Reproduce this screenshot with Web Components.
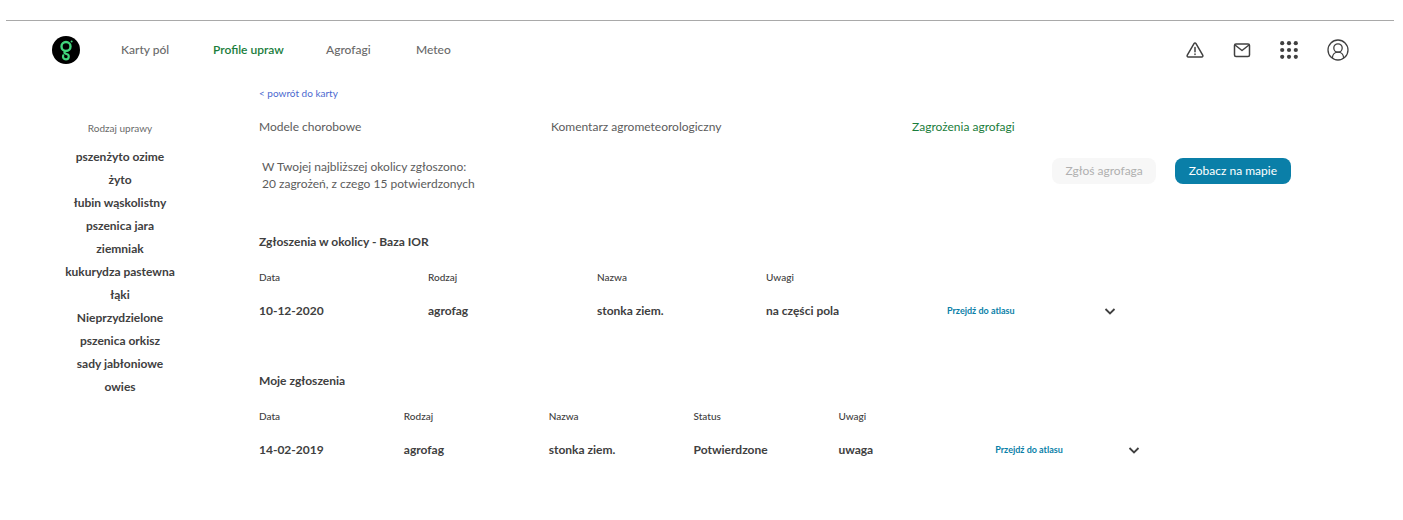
<!DOCTYPE html>
<html lang="pl">
<head>
<meta charset="utf-8">
<meta name="viewport" content="width=device-width, initial-scale=1">
<title>Profile upraw – Zagrożenia agrofagi</title>
<style>
  body {
    margin: 0;
    background: #fff;
    color: #404040;
    font: 12px/20px Lato, "Open Sans", sans-serif;
    --green: #1a7d3c;
    --blue: #0a7fa8;
    --grey: #6a6a6a;
  }
</style>
</head>
<body>
<profile-page>
  <app-header slot="header">
    <nav-item href="#pola">Karty pól</nav-item>
    <nav-item href="#profile" active>Profile upraw</nav-item>
    <nav-item href="#agrofagi">Agrofagi</nav-item>
    <nav-item href="#meteo">Meteo</nav-item>
  </app-header>
  <crop-list slot="side" heading="Rodzaj uprawy"
    items="pszenżyto ozime|żyto|łubin wąskolistny|pszenica jara|ziemniak|kukurydza pastewna|łąki|Nieprzydzielone|pszenica orkisz|sady jabłoniowe|owies"></crop-list>
  <page-tabs items="Modele chorobowe|Komentarz agrometeorologiczny|Zagrożenia agrofagi" current="2"></page-tabs>
  <threat-summary>
    W Twojej najbliższej okolicy zgłoszono:<br>20 zagrożeń, z czego 15 potwierdzonych
  </threat-summary>
  <report-table heading="Zgłoszenia w okolicy - Baza IOR" columns="Data|Rodzaj|Nazwa|Uwagi"
    values="10-12-2020|agrofag|stonka ziem.|na części pola"></report-table>
  <report-table heading="Moje zgłoszenia" columns="Data|Rodzaj|Nazwa|Status|Uwagi"
    values="14-02-2019|agrofag|stonka ziem.|Potwierdzone|uwaga"></report-table>
</profile-page>

<script>
const base = `
  * { box-sizing: border-box; }
  a { color: inherit; text-decoration: none; }
  button { font: inherit; color: inherit; margin: 0; padding: 0; border: 0; background: none; cursor: pointer; }
  svg { display: block; }
`;

class Base extends HTMLElement {
  connectedCallback() {
    if (this.shadowRoot) return;
    this.attachShadow({ mode: 'open' }).innerHTML = `<style>${base}${this.css()}</style>${this.html()}`;
  }
  list(name) { return this.getAttribute(name).split('|'); }
}

customElements.define('profile-page', class extends Base {
  css() { return `
    :host { display: block; padding: 20px 0; }
    .body { display: flex; }
    aside { flex: 0 0 240px; padding-top: 41px; }
    main { flex: 1; min-width: 0; padding: 6px 112px 0 19px; }
    .back { display: block; width: max-content; font-size: 10px; line-height: 16px; color: #4b69cf; margin-bottom: 16px; }
  `; }
  html() { return `
    <slot name="header"></slot>
    <div class="body">
      <aside><slot name="side"></slot></aside>
      <main><a class="back" href="#karta">&lt; powrót do karty</a><slot></slot></main>
    </div>`; }
});

customElements.define('app-header', class extends Base {
  css() { return `
    :host { display: block; margin: 0 9px 0 6px; border-top: 1px solid #a9a9a9; }
    header { display: flex; align-items: center; height: 58px; padding: 0 42px 0 46px; }
    nav { display: grid; grid-template-columns: 92px 113px 90px auto; margin-left: 41px; }
    .tools { display: flex; align-items: center; gap: 23px; margin-left: auto; color: #404040; }
  `; }
  html() { return `
    <header>
      <a href="#" aria-label="Strona główna">
        <svg width="28" height="28" viewBox="0 0 28 28" fill="none" stroke="#41d57c">
          <circle cx="14" cy="14" r="14" fill="#000" stroke="none"/>
          <circle cx="14" cy="10.500" r="4.500" stroke-width="2.400"/>
          <path d="M14 15c-2 .6-2.200 2.200-.4 2.700l1.600.5c2.400.8 2 5.200-1.200 5.200-2.400 0-3.500-2-2.800-4" stroke-width="2.200" stroke-linecap="round"/>
          <circle cx="19.600" cy="5.400" r="1" fill="#41d57c" stroke="none"/>
        </svg>
      </a>
      <nav><slot></slot></nav>
      <div class="tools">
        <button aria-label="Ostrzeżenia"><svg width="24" height="24" viewBox="0 0 24 24" fill="none" stroke="currentColor" stroke-width="1.500" stroke-linejoin="round" stroke-linecap="round"><path d="M11 5.700 4.300 17.200c-.5.9 0 1.900 1 1.900h13.400c1 0 1.500-1 1-1.900L13 5.700c-.5-.8-1.500-.8-2 0Z"/><path d="M12 9.500v4.200M12 16v.5"/></svg></button>
        <button aria-label="Wiadomości"><svg width="24" height="24" viewBox="0 0 24 24" fill="none" stroke="currentColor" stroke-width="1.500" stroke-linejoin="round"><rect x="4.500" y="6" width="15" height="12.500" rx="1.500"/><path d="m5 7 7 5.500L19 7"/></svg></button>
        <button aria-label="Aplikacje"><svg width="24" height="24" viewBox="0 0 24 24" fill="currentColor"><circle cx="5.200" cy="5.200" r="2.100"/><circle cx="12" cy="5.200" r="2.100"/><circle cx="18.800" cy="5.200" r="2.100"/><circle cx="5.200" cy="12" r="2.100"/><circle cx="12" cy="12" r="2.100"/><circle cx="18.800" cy="12" r="2.100"/><circle cx="5.200" cy="18.800" r="2.100"/><circle cx="12" cy="18.800" r="2.100"/><circle cx="18.800" cy="18.800" r="2.100"/></svg></button>
        <button aria-label="Konto"><svg width="28" height="28" viewBox="-1 -1 28 28" fill="none" stroke="currentColor" stroke-width="1.300"><circle cx="13" cy="13" r="10"/><circle cx="13" cy="11" r="4.200"/><path d="M7.300 21c.2-3.500 2.600-5.800 5.700-5.800s5.500 2.300 5.700 5.800"/></svg></button>
      </div>
    </header>`; }
});

customElements.define('nav-item', class extends Base {
  css() { return `
    :host { display: block; color: var(--grey); font-weight: 500; white-space: nowrap; }
    :host([active]) { color: var(--green); font-weight: 600; }
  `; }
  html() { return `<a href="${this.getAttribute('href')}"><slot></slot></a>`; }
});

customElements.define('crop-list', class extends Base {
  css() { return `
    :host { display: block; text-align: center; }
    h2 { margin: 0 0 9px; font-size: 10px; line-height: 16px; font-weight: 400; color: var(--grey); }
    ul { margin: 0; padding: 0; list-style: none; }
    li { line-height: 23px; font-weight: 700; }
  `; }
  html() { return `<h2>${this.getAttribute('heading')}</h2>
    <ul>${this.list('items').map(t => `<li><a href="#uprawa">${t}</a></li>`).join('')}</ul>`; }
});

customElements.define('page-tabs', class extends Base {
  css() { return `
    :host { display: block; }
    nav { display: grid; grid-template-columns: 292fr 361fr 379fr; color: #5c5c5c; }
    [aria-current] { color: var(--green); }
  `; }
  html() { return `<nav>${this.list('items').map((t, i) =>
    `<a href="#tab${i}"${i == this.getAttribute('current') ? ' aria-current="page"' : ''}>${t}</a>`).join('')}</nav>`; }
});

customElements.define('threat-summary', class extends Base {
  css() { return `
    :host { display: flex; align-items: flex-start; gap: 19px; margin-top: 21px; }
    p { margin: 0 auto 0 3px; line-height: 17px; color: #5c5c5c; }
    button { height: 26px; padding: 0 14px; border-radius: 8px; background: var(--blue); color: #fff; }
    button:disabled { padding: 0 13px; background: #f7f7f7; color: #b0b0b0; cursor: default; }
  `; }
  html() { return `<p><slot></slot></p><button disabled>Zgłoś agrofaga</button><button>Zobacz na mapie</button>`; }
});

customElements.define('report-table', class extends Base {
  css() { return `
    :host { display: block; margin-top: 40px; }
    :host(:last-of-type) { margin-top: 50px; }
    h2 { margin: 0 0 15px; font-size: 12px; line-height: 20px; font-weight: 700; }
    .wrap { padding-right: 18px; }
    table { width: 100%; table-layout: fixed; border-collapse: collapse; text-align: left; }
    th, td { padding: 0; line-height: 20px; }
    th { font-size: 10px; font-weight: 500; padding-bottom: 14px; }
    td { font-weight: 700; }
    .atlas { padding-left: 12px; font-size: 9px; color: var(--blue); }
    button { display: block; }
  `; }
  html() { return `<h2>${this.getAttribute('heading')}</h2>
    <div class="wrap"><table>
      <thead><tr>${this.list('columns').map(t => `<th scope="col">${t}</th>`).join('')}<td></td><td></td></tr></thead>
      <tbody><tr>${this.list('values').map(t => `<td>${t}</td>`).join('')}
        <td class="atlas"><a href="#atlas">Przejdź do atlasu</a></td>
        <td><button aria-label="Rozwiń"><svg width="12" height="12" viewBox="0 0 12 12" fill="none" stroke="currentColor" stroke-width="1.800"><path d="m1.500 4 4.500 4.500L10.500 4"/></svg></button></td>
      </tr></tbody>
    </table></div>`; }
});
</script>
</body>
</html>
